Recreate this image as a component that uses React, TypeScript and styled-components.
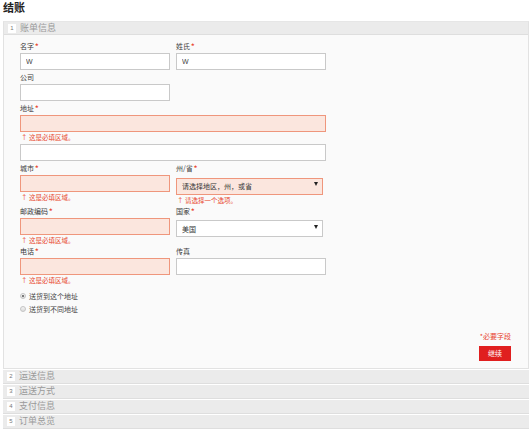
import React from "react";
import styled, { createGlobalStyle } from "styled-components";

const GlobalStyle = createGlobalStyle`
  html, body {
    margin: 0;
    padding: 0;
    background: #fff;
  }
  body {
    font-family: "Liberation Sans", "Noto Sans CJK SC", sans-serif;
    color: #333;
  }
  * {
    box-sizing: border-box;
  }
`;

const Page = styled.div`
  width: 532px;
  padding: 1px 3px 0 3px;
`;

const Title = styled.h1`
  margin: 0 0 7px 0;
  font-size: 11px;
  line-height: 13px;
  height: 13px;
  font-weight: bold;
  color: #222;
  font-family: "Noto Sans CJK SC", sans-serif;
`;

const Section = styled.section`
  width: 526px;
  border: 1px solid #e2e2e2;
  border-top-color: #e6e6e6;
`;

const StepHeader = styled.div<{ $closed?: boolean }>`
  display: flex;
  align-items: center;
  gap: 4px;
  height: ${(p) => (p.$closed ? "14px" : "13px")};
  padding-left: 4px;
  background: #ebebeb;
  border-bottom: 1px solid #dedede;
  margin-top: ${(p) => (p.$closed ? "1px" : "0")};
  width: ${(p) => (p.$closed ? "526px" : "auto")};
`;

const StepNum = styled.span`
  display: inline-flex;
  align-items: center;
  justify-content: center;
  width: 8px;
  height: 9px;
  background: #fff;
  color: #777;
  font-size: 6px;
  line-height: 9px;
`;

const StepName = styled.span`
  font-family: "Noto Sans CJK SC", sans-serif;
  font-size: 9px;
  line-height: 12px;
  color: #9a9a9a;
`;

const Body = styled.div`
  background: #fafafa;
  padding: 7px 16px 7px 16px;
`;

const Grid = styled.div`
  display: grid;
  grid-template-columns: 150px 150px;
  column-gap: 6px;
  row-gap: 3px;
`;

const Field = styled.div<{ $wide?: boolean }>`
  display: flex;
  flex-direction: column;
  grid-column: ${(p) => (p.$wide ? "1 / 3" : "auto")};
`;

const Label = styled.label`
  font-family: "Noto Sans CJK SC", sans-serif;
  font-size: 7px;
  line-height: 9px;
  height: 9px;
  color: #3a3a3a;
  margin-bottom: 2px;
`;

const Req = styled.span`
  color: #e8452f;
  margin-left: 1px;
  font-weight: bold;
`;

const Input = styled.input<{ $error?: boolean; $extra?: boolean }>`
  width: 100%;
  height: 17px;
  margin: ${(p) => (p.$extra ? "3px 0 0 0" : "0")};
  padding: 0 5px;
  border: 1px solid ${(p) => (p.$error ? "#ef967c" : "#c9c9c9")};
  background: ${(p) => (p.$error ? "#fbe6de" : "#fff")};
  font-family: "Liberation Sans", "Noto Sans CJK SC", sans-serif;
  font-size: 7px;
  color: #444;
  outline: none;
`;

const SelectWrap = styled.div`
  position: relative;
  width: 147px;
`;

const Select = styled.select<{ $error?: boolean }>`
  appearance: none;
  width: 100%;
  height: 17px;
  padding: 0 5px;
  border: 1px solid ${(p) => (p.$error ? "#ef967c" : "#c9c9c9")};
  background: ${(p) => (p.$error ? "#fbe6de" : "#fff")};
  font-family: "Noto Sans CJK SC", sans-serif;
  font-size: 7px;
  color: #333;
  outline: none;
`;

const Arrow = styled.span`
  position: absolute;
  right: 5px;
  top: 7px;
  width: 0;
  height: 0;
  border-left: 2.5px solid transparent;
  border-right: 2.5px solid transparent;
  border-top: 4px solid #222;
  pointer-events: none;
`;

const ErrorText = styled.div`
  margin-top: 1px;
  font-family: "Noto Sans CJK SC", sans-serif;
  font-size: 6.5px;
  line-height: 8px;
  height: 8px;
  color: #e8472c;
  padding-left: 1px;
`;

const Radios = styled.div`
  margin-top: 6px;
  display: flex;
  flex-direction: column;
`;

const RadioRow = styled.label`
  display: flex;
  align-items: center;
  gap: 3px;
  height: 13px;
  font-family: "Noto Sans CJK SC", sans-serif;
  font-size: 7px;
  color: #444;
`;

const Radio = styled.span<{ $checked?: boolean }>`
  display: inline-flex;
  align-items: center;
  justify-content: center;
  width: 6px;
  height: 6px;
  border-radius: 50%;
  border: 1px solid #c4c4c4;
  background: linear-gradient(#f4f4f4, #dcdcdc);

  &::after {
    content: "";
    display: ${(p) => (p.$checked ? "block" : "none")};
    width: 2px;
    height: 2px;
    border-radius: 50%;
    background: #555;
  }
`;

const Footer = styled.div`
  margin-top: 16px;
  display: flex;
  flex-direction: column;
  align-items: flex-end;
  padding-right: 1px;
`;

const RequiredNote = styled.div`
  font-family: "Noto Sans CJK SC", sans-serif;
  font-size: 7px;
  line-height: 9px;
  color: #e8452f;
`;

const ContinueButton = styled.button`
  margin-top: 5px;
  width: 32px;
  height: 15px;
  padding: 0;
  border: 0;
  background: #e01f1f;
  color: #fff;
  font-family: "Noto Sans CJK SC", sans-serif;
  font-size: 7px;
  cursor: pointer;
`;

const Steps = styled.div`
  display: flex;
  flex-direction: column;
`;

const closedSteps = ["运送信息", "运送方式", "支付信息", "订单总览"];

export default function App() {
  return (
    <Page>
      <GlobalStyle />
      <Title>结账</Title>
      <Section>
        <StepHeader>
          <StepNum>1</StepNum>
          <StepName>账单信息</StepName>
        </StepHeader>
        <Body>
          <Grid>
            <Field>
              <Label>
                名字<Req>*</Req>
              </Label>
              <Input defaultValue="W" />
            </Field>
            <Field>
              <Label>
                姓氏<Req>*</Req>
              </Label>
              <Input defaultValue="W" />
            </Field>
            <Field>
              <Label>公司</Label>
              <Input />
            </Field>
            <div />
            <Field $wide>
              <Label>
                地址<Req>*</Req>
              </Label>
              <Input $error />
              <ErrorText>↑ 这是必填区域。</ErrorText>
              <Input $extra />
            </Field>
            <Field>
              <Label>
                城市<Req>*</Req>
              </Label>
              <Input $error />
              <ErrorText>↑ 这是必填区域。</ErrorText>
            </Field>
            <Field>
              <Label>
                州/省<Req>*</Req>
              </Label>
              <SelectWrap>
                <Select $error defaultValue="">
                  <option value="">请选择地区，州，或省</option>
                </Select>
                <Arrow />
              </SelectWrap>
              <ErrorText>↑ 请选择一个选项。</ErrorText>
            </Field>
            <Field>
              <Label>
                邮政编码<Req>*</Req>
              </Label>
              <Input $error />
              <ErrorText>↑ 这是必填区域。</ErrorText>
            </Field>
            <Field>
              <Label>
                国家<Req>*</Req>
              </Label>
              <SelectWrap>
                <Select defaultValue="US">
                  <option value="US">美国</option>
                </Select>
                <Arrow />
              </SelectWrap>
            </Field>
            <Field>
              <Label>
                电话<Req>*</Req>
              </Label>
              <Input $error />
              <ErrorText>↑ 这是必填区域。</ErrorText>
            </Field>
            <Field>
              <Label>传真</Label>
              <Input />
            </Field>
          </Grid>
          <Radios>
            <RadioRow>
              <Radio $checked />
              送货到这个地址
            </RadioRow>
            <RadioRow>
              <Radio />
              送货到不同地址
            </RadioRow>
          </Radios>
          <Footer>
            <RequiredNote>*必要字段</RequiredNote>
            <ContinueButton>继续</ContinueButton>
          </Footer>
        </Body>
      </Section>
      <Steps>
        {closedSteps.map((name, i) => (
          <StepHeader $closed key={name}>
            <StepNum>{i + 2}</StepNum>
            <StepName>{name}</StepName>
          </StepHeader>
        ))}
      </Steps>
    </Page>
  );
}
